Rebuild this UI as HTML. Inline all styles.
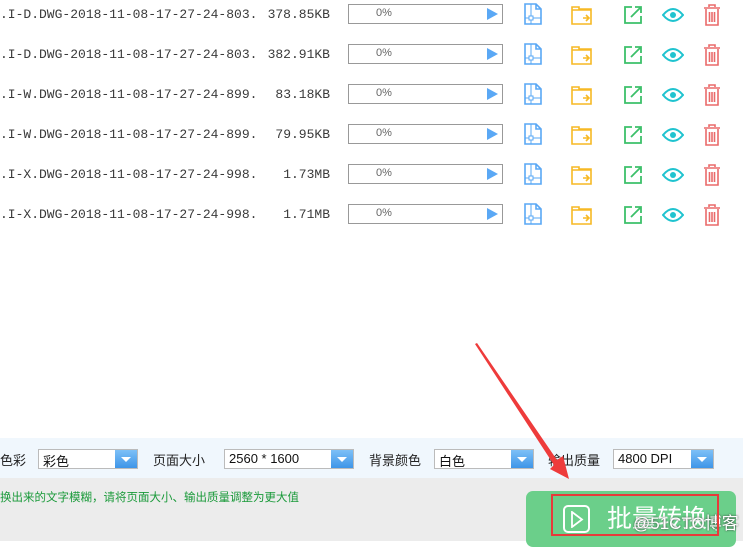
<!DOCTYPE html>
<html><head><meta charset="utf-8"><style>
body{margin:0;width:743px;height:541px;position:relative;overflow:hidden;background:#fff;font-family:"Liberation Sans","Noto Sans CJK SC",sans-serif}
.a{position:absolute}
.fn{font-family:"Liberation Mono","Noto Sans CJK SC",monospace;font-size:13px;color:#3a3a3a;white-space:pre}
.pb{border:1px solid #999;box-sizing:border-box;width:155px;height:20px}
.pb span{position:absolute;left:27px;top:2px;font-size:11px;color:#666}
.pb i{position:absolute;right:4px;top:3px;border-left:11px solid #5aa8f5;border-top:6px solid transparent;border-bottom:6px solid transparent}
.lab{font-size:13px;color:#222;font-family:"Noto Sans CJK SC",sans-serif}
.dd{height:20px;border:1px solid #bbb;box-sizing:border-box;background:#fff;font-size:13px;color:#111;font-family:"Liberation Sans","Noto Sans CJK SC",sans-serif}
.dd span{position:absolute;left:4px;top:1px}
.dd b{position:absolute;right:0;top:0;width:22px;height:18px;background:linear-gradient(#7dc0f7,#3e95e8)}
.dd b:after{content:"";position:absolute;left:6px;top:7px;border-top:5px solid #fff;border-left:5px solid transparent;border-right:5px solid transparent}
</style></head><body>
<div id="rows"></div>
<script>
var d=[["803.","378.85KB","D"],["803.","382.91KB","D"],["899.","83.18KB","W"],["899.","79.95KB","W"],["998.","1.73MB","X"],["998.","1.71MB","X"]];
var h="";
d.forEach(function(r,i){var y=4+i*40;
h+='<div class="a fn" style="left:0;top:'+(y+3)+'px">.I-'+r[2]+'.DWG-2018-11-08-17-27-24-'+r[0]+'</div>';
h+='<div class="a fn" style="right:413px;top:'+(y+3)+'px">'+r[1]+'</div>';
h+='<div class="a pb" style="left:348px;top:'+y+'px"><span>0%</span><i></i></div>';
h+='<svg class="a" style="left:523px;top:'+(y-1)+'px" width="20" height="22" viewBox="0 0 20 22"><path d="M2 1H13L18 6V21H2Z M13 1V6H18" fill="none" stroke="#5aa8f5" stroke-width="1.6"/><path d="M8 1V21 M2 15H18" stroke="#5aa8f5" stroke-width="1"/><rect x="6" y="13" width="4" height="4" fill="#fff" stroke="#5aa8f5" stroke-width="1"/></svg>';
h+='<svg class="a" style="left:571px;top:'+(y+1)+'px" width="22" height="20" viewBox="0 0 22 20"><path d="M1 19V2H8V4H20V19Z M1 5H20" fill="none" stroke="#f7b924" stroke-width="1.6"/><path d="M12 13H18 M15 10L18 13L15 16" fill="none" stroke="#f7b924" stroke-width="1.6"/></svg>';
h+='<svg class="a" style="left:623px;top:'+(y+1)+'px" width="20" height="20" viewBox="0 0 20 20"><path d="M9 2H2V18H18V11" fill="none" stroke="#3cc06a" stroke-width="1.8"/><path d="M8 12L17 3 M12 2H18V8" fill="none" stroke="#3cc06a" stroke-width="1.8"/></svg>';
h+='<svg class="a" style="left:662px;top:'+(y+3)+'px" width="22" height="16" viewBox="0 0 22 16"><path d="M1 8Q11 -4 21 8Q11 20 1 8Z" fill="none" stroke="#1fc3cf" stroke-width="2"/><circle cx="11" cy="8" r="3" fill="#1fc3cf"/></svg>';
h+='<svg class="a" style="left:703px;top:'+y+'px" width="18" height="22" viewBox="0 0 18 22"><path d="M1 4H17 M6 3V1H12V3 M3 5V21H15V5 M6.5 8V18 M9 8V18 M11.5 8V18" fill="none" stroke="#ea6a6a" stroke-width="1.6"/></svg>';
});
document.getElementById("rows").innerHTML=h;
</script>
<div class="a" style="left:0;top:438px;width:743px;height:40px;background:#f0f7fd"></div>
<div class="a" style="left:0;top:478px;width:743px;height:63px;background:#ececec"></div>
<div class="a lab" style="left:0;top:450px">色彩</div>
<div class="a dd" style="left:38px;top:449px;width:100px"><span>彩色</span><b></b></div>
<div class="a lab" style="left:153px;top:450px">页面大小</div>
<div class="a dd" style="left:224px;top:449px;width:130px"><span>2560 * 1600</span><b></b></div>
<div class="a lab" style="left:369px;top:450px">背景颜色</div>
<div class="a dd" style="left:434px;top:449px;width:100px"><span>白色</span><b></b></div>
<div class="a lab" style="left:548px;top:450px">输出质量</div>
<div class="a dd" style="left:613px;top:449px;width:101px"><span>4800 DPI</span><b></b></div>
<div class="a" style="left:0;top:489px;font-size:11.5px;color:#1a9a3a;font-family:'Noto Sans CJK SC',sans-serif">换出来的文字模糊，请将页面大小、输出质量调整为更大值</div>
<div class="a" style="left:526px;top:491px;width:210px;height:56px;background:#6bcf8a;border-radius:7px"></div>
<div class="a" style="left:563px;top:505px;width:27px;height:28px;border:2px solid #fff;border-radius:5px;box-sizing:border-box"></div>
<svg class="a" style="left:570px;top:511px" width="14" height="17"><path d="M2 1L12 8.5L2 16Z" fill="none" stroke="#fff" stroke-width="1.8"/></svg>
<div class="a" style="left:607px;top:499px;font-size:25px;color:#fff;font-family:'Noto Sans CJK SC',sans-serif">批量转换</div>
<div class="a" style="left:633px;top:509px;font-size:17px;color:#fff;text-shadow:0 0 2px #333;font-family:'Liberation Sans','Noto Sans CJK SC',sans-serif">@51CTO博客</div>
<div class="a" style="left:551px;top:494px;width:168px;height:42px;border:2px solid #e83a3a;box-sizing:border-box"></div>
<svg class="a" style="left:0;top:0" width="743" height="541"><path d="M475 344L477 343L557 460L563 456L569 479L550 469L554 465Z" fill="#ee3b3b"/></svg>
</body></html>
